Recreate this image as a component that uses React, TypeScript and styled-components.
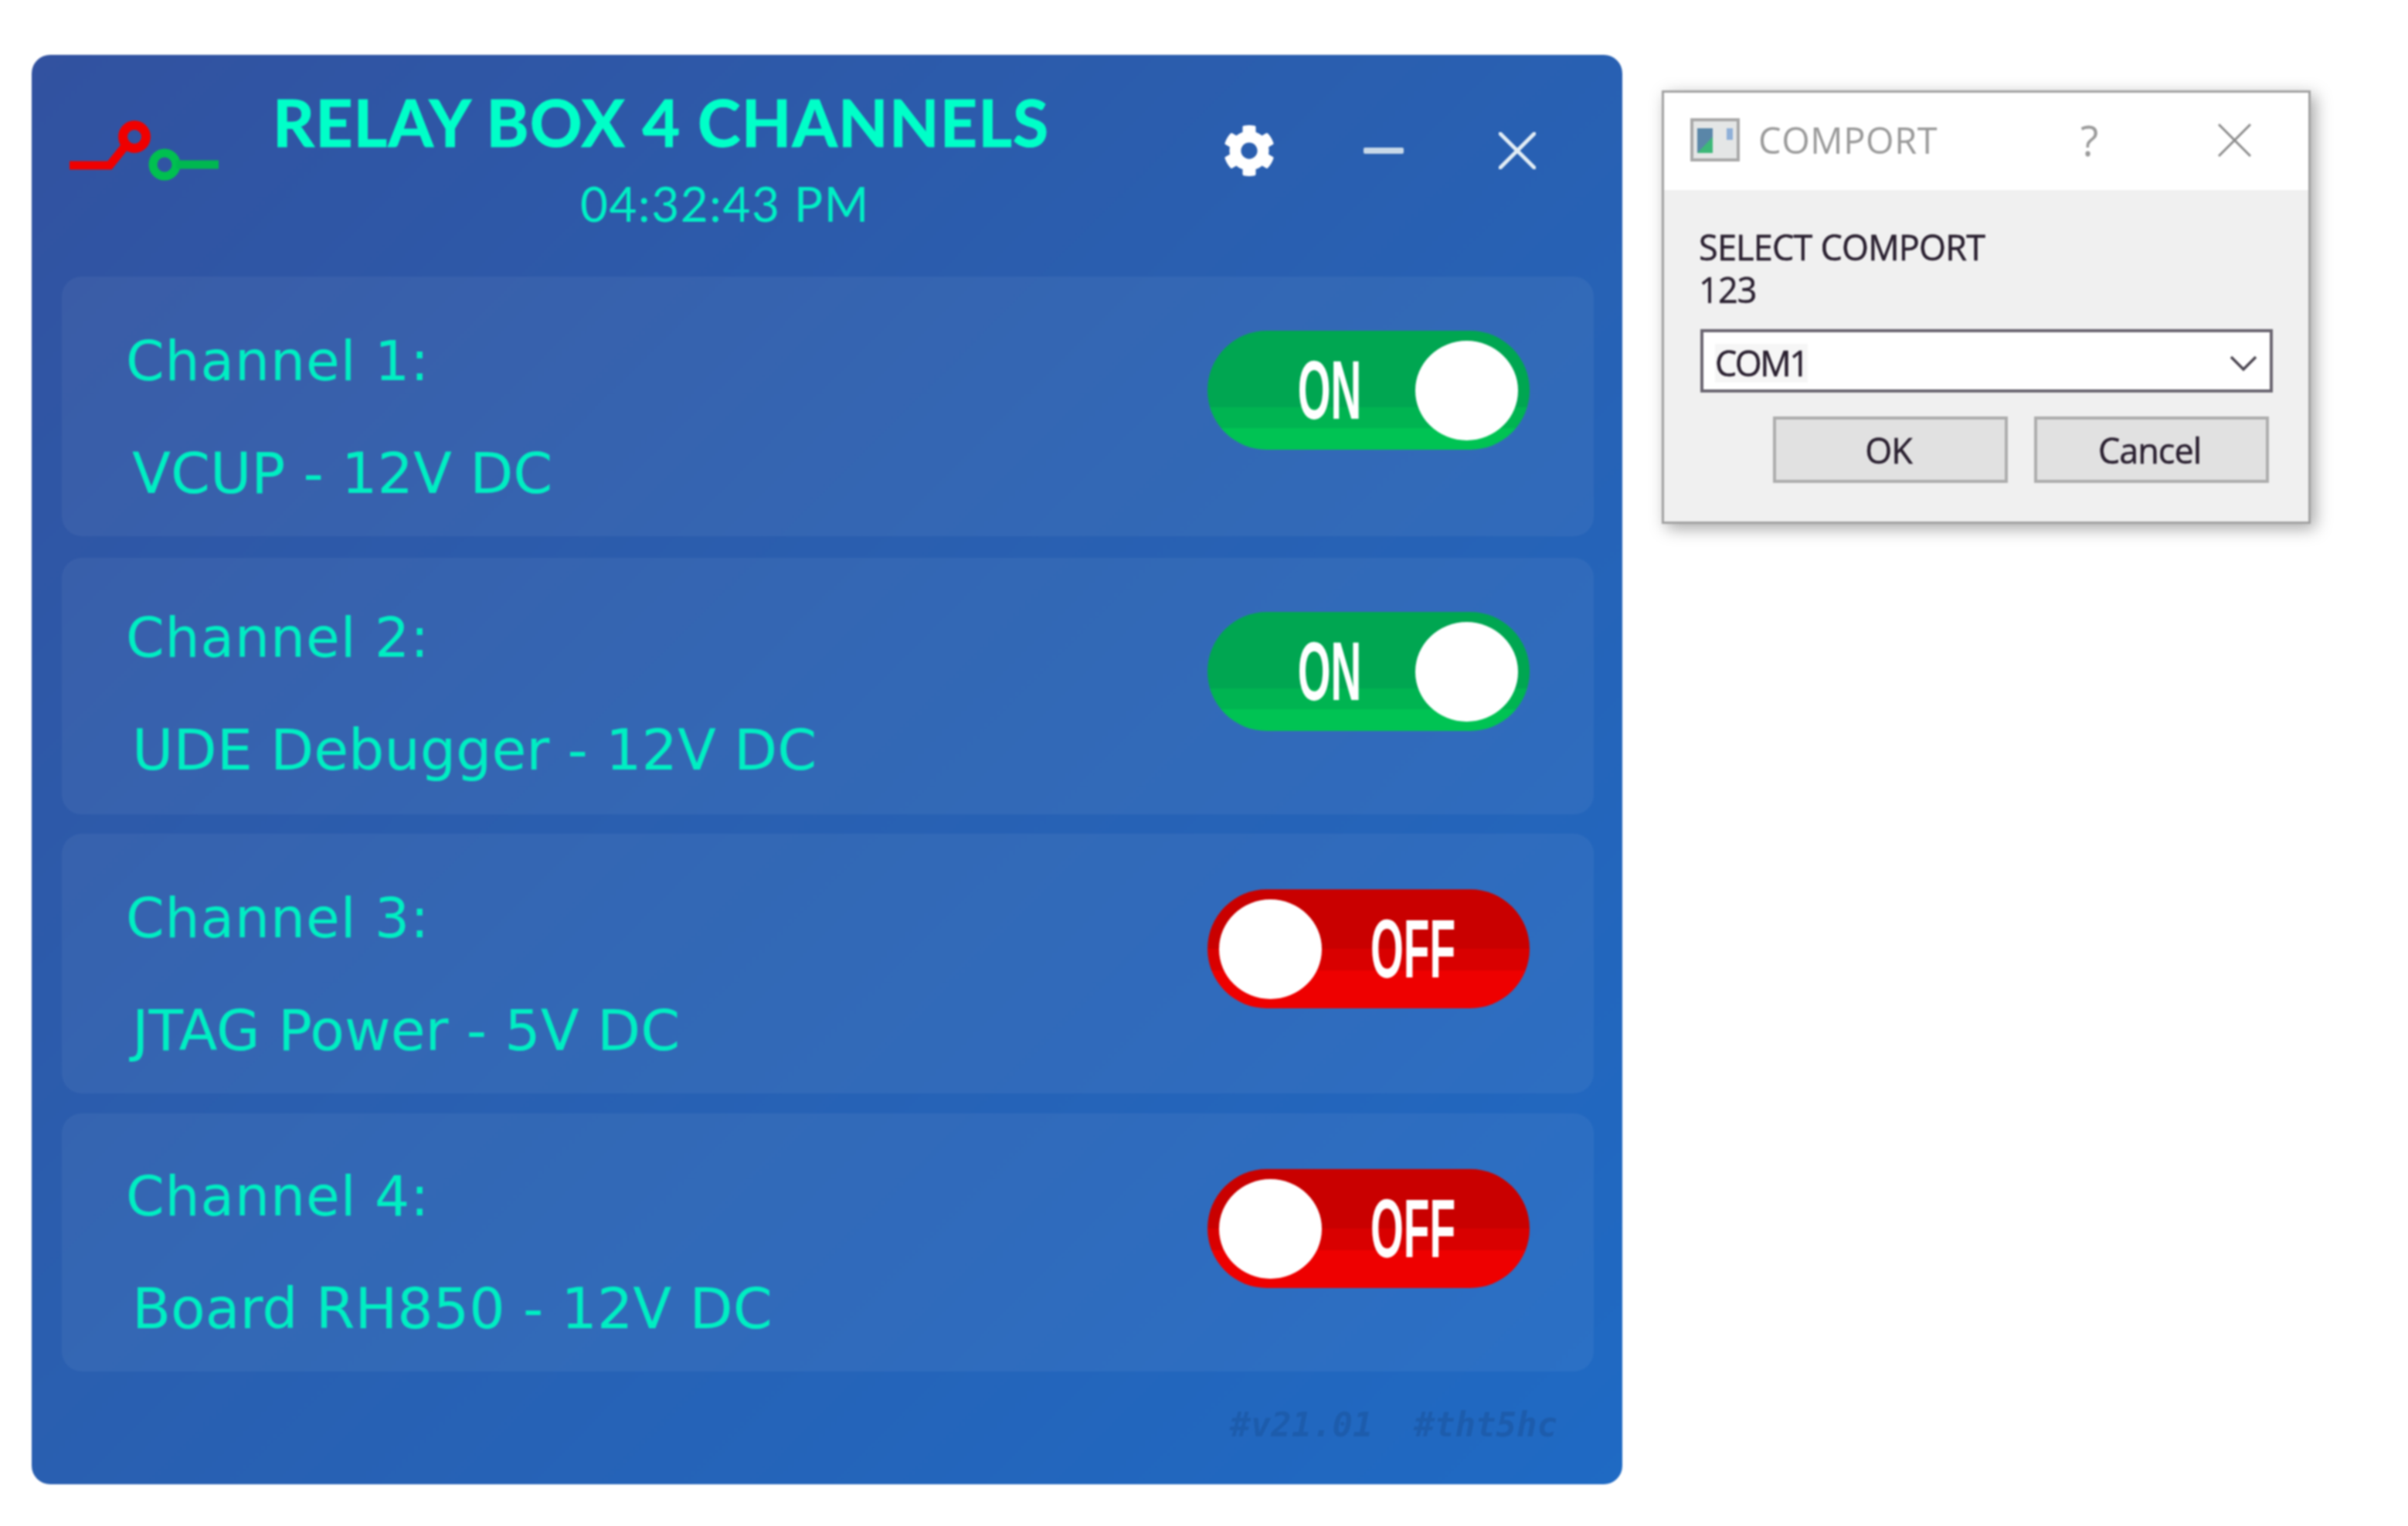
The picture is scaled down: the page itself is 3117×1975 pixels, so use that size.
import React from "react";
import styled, { createGlobalStyle } from "styled-components";
import { FaCog } from "react-icons/fa";

const Global = createGlobalStyle`
  html, body { margin: 0; padding: 0; background: #fff; }
  #root { width: 3117px; height: 1975px; overflow: hidden; }
`;

const Page = styled.div`
  display: flex;
  align-items: flex-start;
  gap: 51px;
  padding: 71px 0 0 41px;
  filter: blur(0.9px);
`;

const Panel = styled.div`
  width: 2059px;
  height: 1850px;
  border-radius: 24px;
  background: linear-gradient(135deg, #3252a0 0%, #2a5fb0 45%, #1f6ac4 100%);
  display: flex;
  flex-direction: column;
`;

const Header = styled.header`
  height: 287px;
  display: flex;
  align-items: flex-start;
`;

const Logo = styled.svg`
  width: 214px;
  height: 90px;
  margin: 84px 0 0 40px;
  flex: none;
`;

const TitleBlock = styled.div`
  margin: 47px 0 0 58px;
  width: 1098px;
  flex: none;
`;

const Title = styled.h1`
  margin: 0;
  font: 700 84px/80px "Lato", "Liberation Sans", sans-serif;
  color: #00ffc8;
  letter-spacing: 1.15px;
  -webkit-text-stroke: 1px #00ffc8;
  white-space: nowrap;
`;

const Clock = styled.div`
  margin: 25px 0 0 398px;
  font: 400 62px/80px "Lato", "Liberation Sans", sans-serif;
  color: #00f0c4;
  letter-spacing: 1.6px;
  white-space: nowrap;
`;

const WindowControls = styled.div`
  display: flex;
  align-items: center;
  margin: 90px 0 0 132px;
`;

const GearSlot = styled.span`
  display: flex;
  color: #fff;
  width: 68px;
  height: 68px;
  margin-right: 114px;
`;

const MinusBar = styled.span`
  width: 52px;
  height: 8px;
  border-radius: 2px;
  background: #c8d8e8;
  margin-right: 123px;
`;

const CloseGlyph = styled.svg`
  width: 48px;
  height: 48px;
`;

const Channels = styled.div`
  display: flex;
  flex-direction: column;
  padding: 0 37px 0 39px;
`;

const Card = styled.section<{ $h: number; $gap: number }>`
  height: ${(p) => p.$h}px;
  margin-bottom: ${(p) => p.$gap}px;
  box-sizing: border-box;
  padding: 70px 83px 0 83px;
  border-radius: 26px;
  background: rgba(255, 255, 255, 0.05);
  display: flex;
  justify-content: space-between;
  align-items: flex-start;
`;

const CardText = styled.div<{ $top: number }>`
  margin-top: ${(p) => p.$top}px;
  color: #00eec2;
  font-family: "DejaVu Sans", sans-serif;
  white-space: nowrap;
`;

const ChannelName = styled.div`
  font-size: 71px;
  line-height: 80px;
  letter-spacing: 1px;
`;

const DeviceName = styled.div`
  font-size: 73px;
  line-height: 80px;
  margin: 65px 0 0 8px;
`;

const Toggle = styled.div<{ $on: boolean }>`
  width: 417px;
  height: 154px;
  margin-top: ${(p) => (p.$on ? 0 : 2)}px;
  border-radius: 77px;
  box-sizing: border-box;
  flex: none;
  display: flex;
  align-items: center;
  padding: 0 15px;
  flex-direction: ${(p) => (p.$on ? "row-reverse" : "row")};
  gap: ${(p) => (p.$on ? 71 : 61)}px;
  background: ${(p) =>
    p.$on
      ? "linear-gradient(180deg, #00a651 0 64%, #00b451 64% 82%, #00c353 82% 100%)"
      : "linear-gradient(180deg, #c90000 0 50%, #d90000 50% 68%, #ee0000 68% 100%)"};
`;

const Knob = styled.span`
  width: 133px;
  height: 129px;
  border-radius: 50%;
  background: #fff;
  flex: none;
`;

const ToggleLabel = styled.span<{ $w: number }>`
  width: ${(p) => p.$w}px;
  display: flex;
  justify-content: center;
  flex: none;
`;

const ToggleText = styled.span`
  font: 700 108px/108px "Liberation Sans", sans-serif;
  color: #fff;
  transform: scaleX(0.51);
  white-space: nowrap;
`;

const Footer = styled.div`
  margin-top: 42px;
  padding-right: 84px;
  text-align: right;
  font: italic 700 44px/54px "DejaVu Sans Mono", monospace;
  color: #1d5cac;
  white-space: pre;
`;

const Dialog = styled.div`
  margin-top: 46px;
  width: 840px;
  height: 561px;
  box-sizing: border-box;
  border: 3px solid #a2a2a2;
  background: #f0f0f0;
  box-shadow: 6px 6px 20px rgba(0, 0, 0, 0.35);
  font-family: "Open Sans", sans-serif;
  flex: none;
`;

const DialogTitle = styled.div`
  height: 126px;
  box-sizing: border-box;
  padding: 0 0 4px 34px;
  background: #fff;
  display: flex;
  align-items: center;
  color: #9a9a9a;
`;

const DialogIcon = styled.svg`
  width: 64px;
  height: 56px;
  flex: none;
`;

const DialogName = styled.span`
  font-weight: 400;
  font-size: 47px;
  margin-left: 24px;
  width: 417px;
  letter-spacing: 0.6px;
`;

const HelpMark = styled.span`
  font-weight: 400;
  font-size: 54px;
  width: 178px;
`;

const DialogClose = styled.svg`
  width: 43px;
  height: 43px;
`;

const DialogBody = styled.div`
  padding: 46px 47px 0 45px;
  color: #2a2030;
  font-size: 45px;
`;

const Prompt = styled.div`
  line-height: 55px;
  letter-spacing: -0.8px;
  white-space: nowrap;
  -webkit-text-stroke: 0.5px #2a2030;
`;

const SelectBox = styled.div`
  margin: 24px 0 0 2px;
  height: 82px;
  width: 741px;
  box-sizing: border-box;
  border: 4px solid #6a6570;
  background: #fff;
  display: flex;
  align-items: center;
  justify-content: space-between;
  padding: 5px 16px 0 15px;
`;

const SelectValue = styled.span`
  background: #f6f6f6;
  letter-spacing: -2.5px;
  line-height: 50px;
  -webkit-text-stroke: 0.5px #2a2030;
`;

const Chevron = styled.svg`
  width: 36px;
  height: 22px;
`;

const ButtonRow = styled.div`
  display: flex;
  justify-content: flex-end;
  gap: 34px;
  margin: 31px 4px 0 0;
`;

const DialogButton = styled.button`
  width: 304px;
  height: 86px;
  padding: 0 5px 0 0;
  box-sizing: border-box;
  border: 4px solid #adadad;
  background: #e1e1e1;
  color: #2a2030;
  font: 400 45px "Open Sans", sans-serif;
  letter-spacing: -1px;
  -webkit-text-stroke: 0.5px #2a2030;
`;

const channels = [
  { name: "Channel 1:", device: "VCUP - 12V DC", on: true, h: 336, gap: 28, top: 0 },
  { name: "Channel 2:", device: "UDE Debugger - 12V DC", on: true, h: 332, gap: 25, top: -6 },
  { name: "Channel 3:", device: "JTAG Power - 5V DC", on: false, h: 336, gap: 26, top: 0 },
  { name: "Channel 4:", device: "Board RH850 - 12V DC", on: false, h: 334, gap: 0, top: -2 },
];

export default function App() {
  return (
    <Page>
      <Global />
      <Panel>
        <Header>
          <Logo viewBox="21 25 214 90">
            <path d="M30 84 H82 L106 54" fill="none" stroke="#f00000" strokeWidth="11" />
            <circle cx="114" cy="47" r="15" fill="none" stroke="#f00000" strokeWidth="12" />
            <circle cx="153" cy="83" r="15" fill="none" stroke="#00c050" strokeWidth="11" />
            <path d="M168 83 H223" fill="none" stroke="#00b850" strokeWidth="11" />
          </Logo>
          <TitleBlock>
            <Title>RELAY BOX 4 CHANNELS</Title>
            <Clock>04:32:43 PM</Clock>
          </TitleBlock>
          <WindowControls>
            <GearSlot>
              <FaCog size={68} />
            </GearSlot>
            <MinusBar />
            <CloseGlyph viewBox="0 0 48 48">
              <path d="M2 2 L46 46 M46 2 L2 46" stroke="#e2edf5" strokeWidth="5" strokeLinecap="round" />
            </CloseGlyph>
          </WindowControls>
        </Header>
        <Channels>
          {channels.map((c) => (
            <Card key={c.name} $h={c.h} $gap={c.gap}>
              <CardText $top={c.top}>
                <ChannelName>{c.name}</ChannelName>
                <DeviceName>{c.device}</DeviceName>
              </CardText>
              <Toggle $on={c.on}>
                <Knob />
                <ToggleLabel $w={c.on ? 80 : 113}>
                  <ToggleText>{c.on ? "ON" : "OFF"}</ToggleText>
                </ToggleLabel>
              </Toggle>
            </Card>
          ))}
        </Channels>
        <Footer>{"#v21.01  #tht5hc"}</Footer>
      </Panel>
      <Dialog>
        <DialogTitle>
          <DialogIcon viewBox="0 0 64 56">
            <rect x="2" y="2" width="60" height="52" fill="#e4e6e6" stroke="#a8a8a8" strokeWidth="4" />
            <rect x="9" y="13" width="20" height="32" fill="#5a86a8" />
            <path d="M9 45 L29 24 V45 Z" fill="#3cb878" />
            <rect x="47" y="13" width="8" height="15" fill="#8fb0d8" />
          </DialogIcon>
          <DialogName>COMPORT</DialogName>
          <HelpMark>?</HelpMark>
          <DialogClose viewBox="0 0 43 43">
            <path d="M1 1 L42 42 M42 1 L1 42" stroke="#8c8c8c" strokeWidth="3" />
          </DialogClose>
        </DialogTitle>
        <DialogBody>
          <Prompt>SELECT COMPORT</Prompt>
          <Prompt>123</Prompt>
          <SelectBox>
            <SelectValue>COM1</SelectValue>
            <Chevron viewBox="0 0 36 22">
              <path d="M2 3 L18 19 L34 3" fill="none" stroke="#4a4550" strokeWidth="3.5" />
            </Chevron>
          </SelectBox>
          <ButtonRow>
            <DialogButton>OK</DialogButton>
            <DialogButton>Cancel</DialogButton>
          </ButtonRow>
        </DialogBody>
      </Dialog>
    </Page>
  );
}
